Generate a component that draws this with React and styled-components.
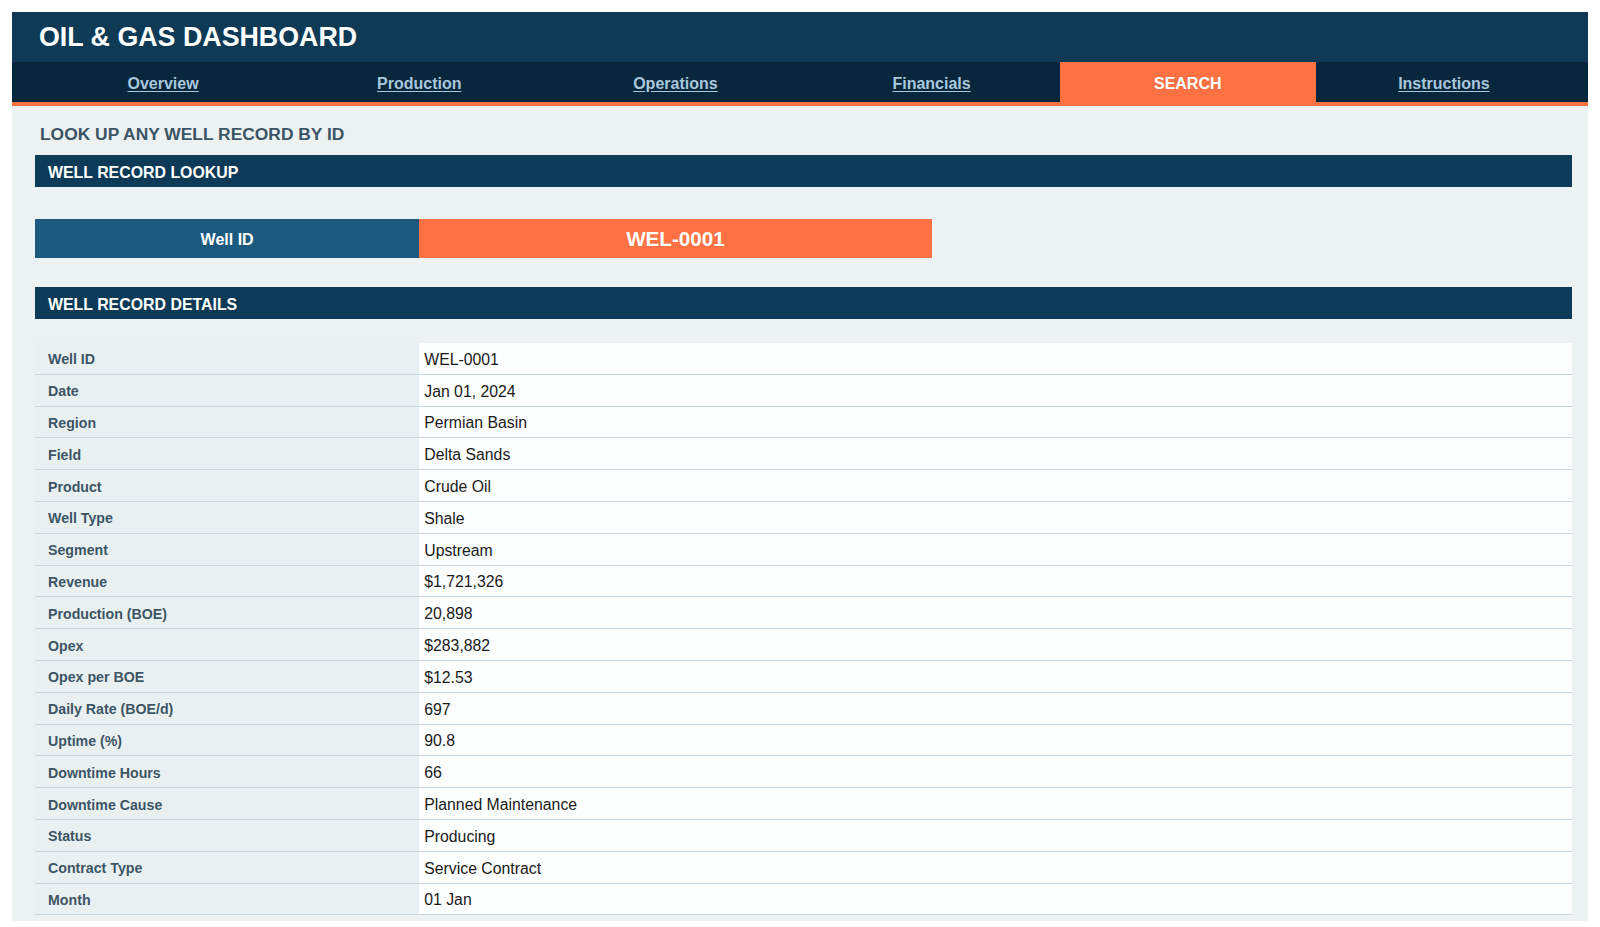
import React from "react";
import styled, { createGlobalStyle } from "styled-components";

const Global = createGlobalStyle`
  html, body { margin: 0; padding: 0; background: #ffffff; }
  body { font-family: "Liberation Sans", Arial, Helvetica, sans-serif; }
  * { box-sizing: border-box; }
`;

const Page = styled.div`
  padding: 12px 12px 0 12px;
`;

const Shell = styled.div`
  background: #ecf1f2;
  padding-bottom: 6px;
`;

const Header = styled.header`
  height: 50px;
  background: #0e3a56;
  display: flex;
  align-items: center;
  padding-left: 27px;
  padding-top: 1px;
`;

const Title = styled.h1`
  margin: 0;
  color: #ffffff;
  font-size: 26.8px;
  font-weight: 700;
`;

const Nav = styled.nav`
  display: grid;
  grid-template-columns: repeat(6, 1fr);
  height: 44px;
  padding: 0 16px 0 23px;
  background: #08263c;
  border-bottom: 4px solid #fe7142;
`;

const Tab = styled.a`
  display: flex;
  align-items: center;
  justify-content: center;
  padding-top: 3px;
  font-size: 16px;
  font-weight: 700;
  color: ${(p) => (p.$active ? "#ffffff" : "#a9c8dc")};
  background: ${(p) => (p.$active ? "#fe7142" : "transparent")};
  text-decoration: ${(p) => (p.$active ? "none" : "underline")};
  text-underline-offset: 2px;
  cursor: pointer;
`;

const Content = styled.main`
  padding: 0 16px 0 23px;
`;

const PageHeading = styled.h2`
  margin: 0;
  padding: 18px 0 0 5px;
  height: 49px;
  font-size: 17.4px;
  font-weight: 700;
  color: #3c5566;
`;

const SectionBar = styled.div`
  height: 32px;
  background: #0d3a56;
  color: #ffffff;
  display: flex;
  align-items: center;
  padding: 3px 0 0 13px;
  font-size: 15.9px;
  font-weight: 700;
`;

const LookupRow = styled.div`
  display: grid;
  grid-template-columns: 25% 33.33%;
  height: 39px;
  margin: 32px 0 29px;
`;

const LookupLabel = styled.div`
  background: #1b5a7e;
  color: #ffffff;
  font-size: 16px;
  font-weight: 700;
  display: flex;
  align-items: center;
  justify-content: center;
  padding-top: 2px;
`;

const LookupValue = styled.div`
  background: #fe7142;
  color: #ffffff;
  font-size: 20.6px;
  font-weight: 700;
  display: flex;
  align-items: center;
  justify-content: center;
  padding-top: 1px;
`;

const Table = styled.div`
  margin-top: 24px;
`;

const Row = styled.div`
  display: grid;
  grid-template-columns: 25% 75%;
  height: 31.8px;
  border-bottom: 1px solid #c8d7df;
`;

const Label = styled.div`
  display: flex;
  align-items: center;
  padding-left: 13px;
  padding-top: 2px;
  font-size: 14.2px;
  font-weight: 700;
  color: #3e5565;
  background: #e9f0f2;
`;

const Value = styled.div`
  display: flex;
  align-items: center;
  padding-left: 5px;
  padding-top: 3px;
  font-size: 15.8px;
  color: #1a1a1a;
  background: #fdfefe;
`;

const tabs = ["Overview", "Production", "Operations", "Financials", "SEARCH", "Instructions"];

const record = [
  ["Well ID", "WEL-0001"],
  ["Date", "Jan 01, 2024"],
  ["Region", "Permian Basin"],
  ["Field", "Delta Sands"],
  ["Product", "Crude Oil"],
  ["Well Type", "Shale"],
  ["Segment", "Upstream"],
  ["Revenue", "$1,721,326"],
  ["Production (BOE)", "20,898"],
  ["Opex", "$283,882"],
  ["Opex per BOE", "$12.53"],
  ["Daily Rate (BOE/d)", "697"],
  ["Uptime (%)", "90.8"],
  ["Downtime Hours", "66"],
  ["Downtime Cause", "Planned Maintenance"],
  ["Status", "Producing"],
  ["Contract Type", "Service Contract"],
  ["Month", "01 Jan"],
];

export default function App() {
  return (
    <>
      <Global />
      <Page>
        <Shell>
          <Header>
            <Title>OIL &amp; GAS DASHBOARD</Title>
          </Header>
          <Nav>
            {tabs.map((t) => (
              <Tab key={t} $active={t === "SEARCH"}>
                {t}
              </Tab>
            ))}
          </Nav>
          <Content>
            <PageHeading>LOOK UP ANY WELL RECORD BY ID</PageHeading>
            <SectionBar>WELL RECORD LOOKUP</SectionBar>
            <LookupRow>
              <LookupLabel>Well ID</LookupLabel>
              <LookupValue>WEL-0001</LookupValue>
            </LookupRow>
            <SectionBar>WELL RECORD DETAILS</SectionBar>
            <Table>
              {record.map(([k, v]) => (
                <Row key={k}>
                  <Label>{k}</Label>
                  <Value>{v}</Value>
                </Row>
              ))}
            </Table>
          </Content>
        </Shell>
      </Page>
    </>
  );
}
